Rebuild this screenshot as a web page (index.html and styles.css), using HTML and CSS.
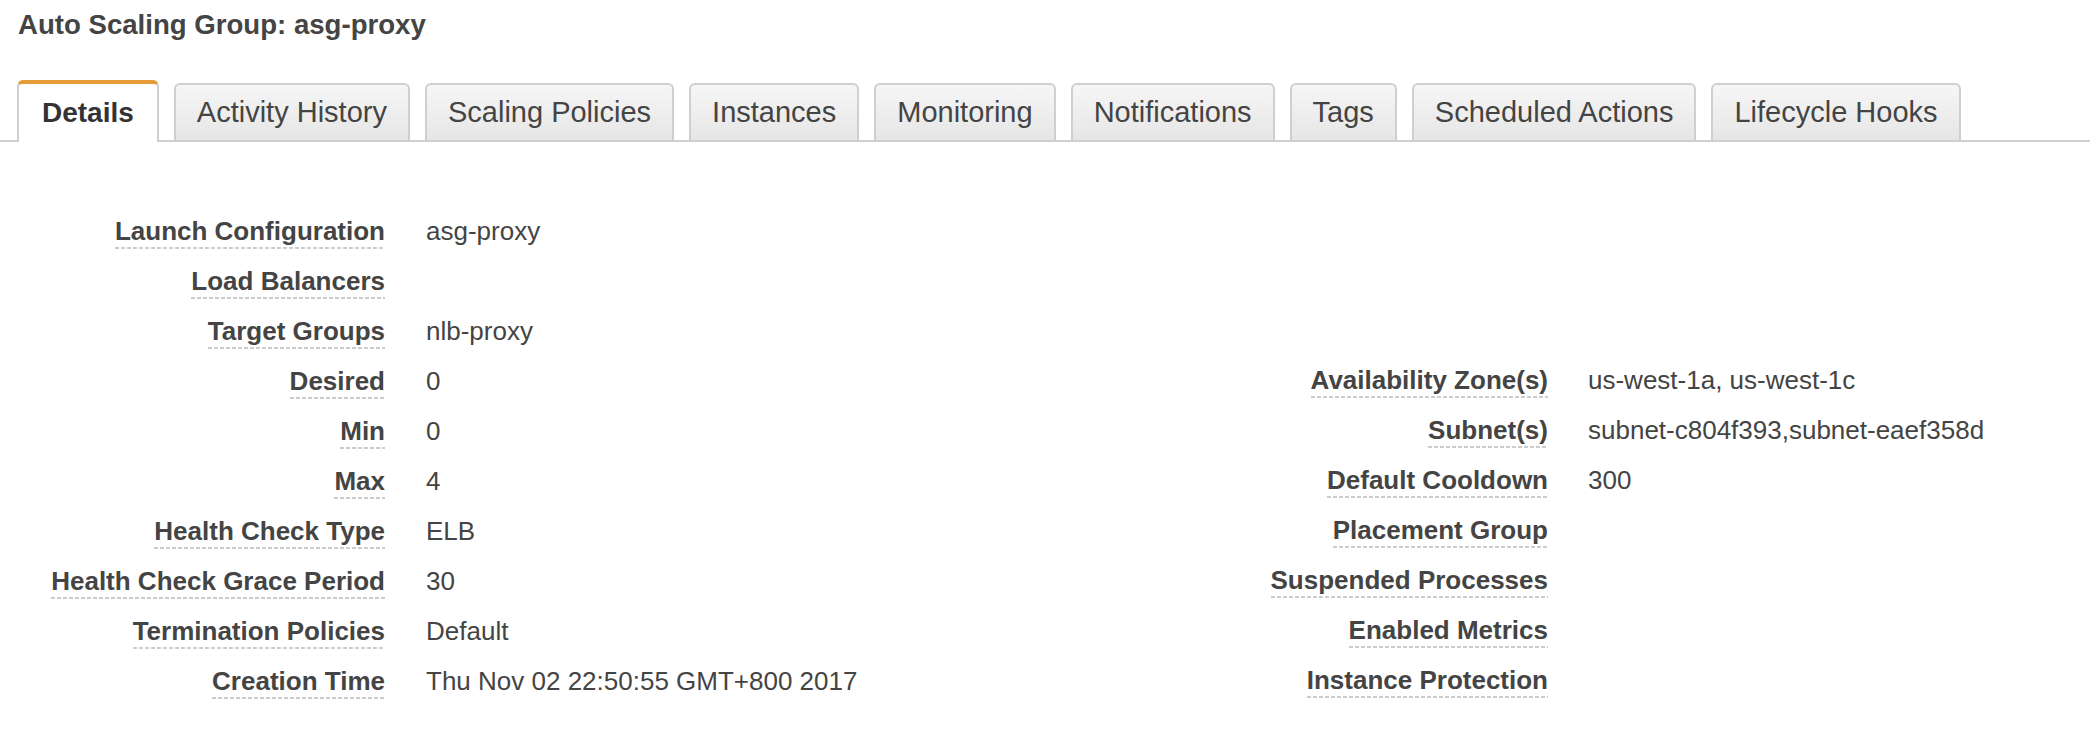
FILE: index.html
```html
<!DOCTYPE html>
<html>
<head>
<meta charset="utf-8">
<link rel="stylesheet" href="styles.css">
</head>
<body>
<h1 class="title">Auto Scaling Group: asg-proxy</h1>
<ul class="tabs">
  <li class="tab active">Details</li>
  <li class="tab">Activity History</li>
  <li class="tab">Scaling Policies</li>
  <li class="tab">Instances</li>
  <li class="tab">Monitoring</li>
  <li class="tab">Notifications</li>
  <li class="tab">Tags</li>
  <li class="tab">Scheduled Actions</li>
  <li class="tab">Lifecycle Hooks</li>
</ul>
<div class="details">
  <div class="col col-left">
    <div class="row"><div class="label"><span>Launch Configuration</span></div><div class="value">asg-proxy</div></div>
    <div class="row"><div class="label"><span>Load Balancers</span></div><div class="value"></div></div>
    <div class="row"><div class="label"><span>Target Groups</span></div><div class="value">nlb-proxy</div></div>
    <div class="row"><div class="label"><span>Desired</span></div><div class="value">0</div></div>
    <div class="row"><div class="label"><span>Min</span></div><div class="value">0</div></div>
    <div class="row"><div class="label"><span>Max</span></div><div class="value">4</div></div>
    <div class="row"><div class="label"><span>Health Check Type</span></div><div class="value">ELB</div></div>
    <div class="row"><div class="label"><span>Health Check Grace Period</span></div><div class="value">30</div></div>
    <div class="row"><div class="label"><span>Termination Policies</span></div><div class="value">Default</div></div>
    <div class="row"><div class="label"><span>Creation Time</span></div><div class="value">Thu Nov 02 22:50:55 GMT+800 2017</div></div>
  </div>
  <div class="col col-right">
    <div class="row"><div class="label"><span>Availability Zone(s)</span></div><div class="value">us-west-1a, us-west-1c</div></div>
    <div class="row"><div class="label"><span>Subnet(s)</span></div><div class="value">subnet-c804f393,subnet-eaef358d</div></div>
    <div class="row"><div class="label"><span>Default Cooldown</span></div><div class="value">300</div></div>
    <div class="row"><div class="label"><span>Placement Group</span></div><div class="value"></div></div>
    <div class="row"><div class="label"><span>Suspended Processes</span></div><div class="value"></div></div>
    <div class="row"><div class="label"><span>Enabled Metrics</span></div><div class="value"></div></div>
    <div class="row"><div class="label"><span>Instance Protection</span></div><div class="value"></div></div>
  </div>
</div>
</body>
</html>
```
FILE: styles.css
```css
html, body {
  margin: 0;
  padding: 0;
  background: #fff;
}
body {
  font-family: "Liberation Sans", Arial, Helvetica, sans-serif;
  color: #444;
  width: 2090px;
  height: 742px;
  overflow: hidden;
}
.title {
  margin: 0;
  padding: 9px 0 0 18px;
  font-size: 27.6px;
  line-height: 32px;
  font-weight: bold;
  color: #444;
}
.tabs {
  list-style: none;
  margin: 39px 0 0 0;
  padding: 0 0 0 17px;
  height: 60px;
  display: flex;
  align-items: flex-end;
  gap: 15px;
  border-bottom: 2px solid #cfcfcf;
}
.tab {
  box-sizing: border-box;
  height: 57px;
  padding: 11px 21px 0 21px;
  font-size: 29px;
  line-height: 32px;
  color: #444;
  white-space: nowrap;
  border: 2px solid #cfcfcf;
  border-bottom: none;
  border-radius: 6px 6px 0 0;
  background: linear-gradient(to bottom, #f6f6f6, #e6e6e6);
}
.tab.active {
  height: 62px;
  margin-bottom: -2px;
  padding: 13px 23px 0 23px;
  font-size: 28px;
  border-top: 4px solid #e59c39;
  background: #fff;
  font-weight: bold;
  color: #333;
}
.details {
  display: flex;
  margin-top: 74px;
}
.col-left {
  width: 1163px;
}
.col-right {
  padding-top: 149px;
}
.row {
  display: flex;
  height: 50px;
}
.label {
  width: 385px;
  flex: none;
  text-align: right;
}
.label span {
  display: inline-block;
  font-size: 26px;
  line-height: 30px;
  font-weight: bold;
  color: #444;
  padding-bottom: 3px;
  background-image: linear-gradient(to right, #cccccc 0, #cccccc 4px, transparent 4px);
  background-size: 6px 2px;
  background-repeat: repeat-x;
  background-position: left bottom;
  white-space: nowrap;
}
.value {
  margin-left: 41px;
  font-size: 26px;
  line-height: 30px;
  color: #444;
  white-space: nowrap;
}
.col-right .value {
  margin-left: 40px;
}
```
